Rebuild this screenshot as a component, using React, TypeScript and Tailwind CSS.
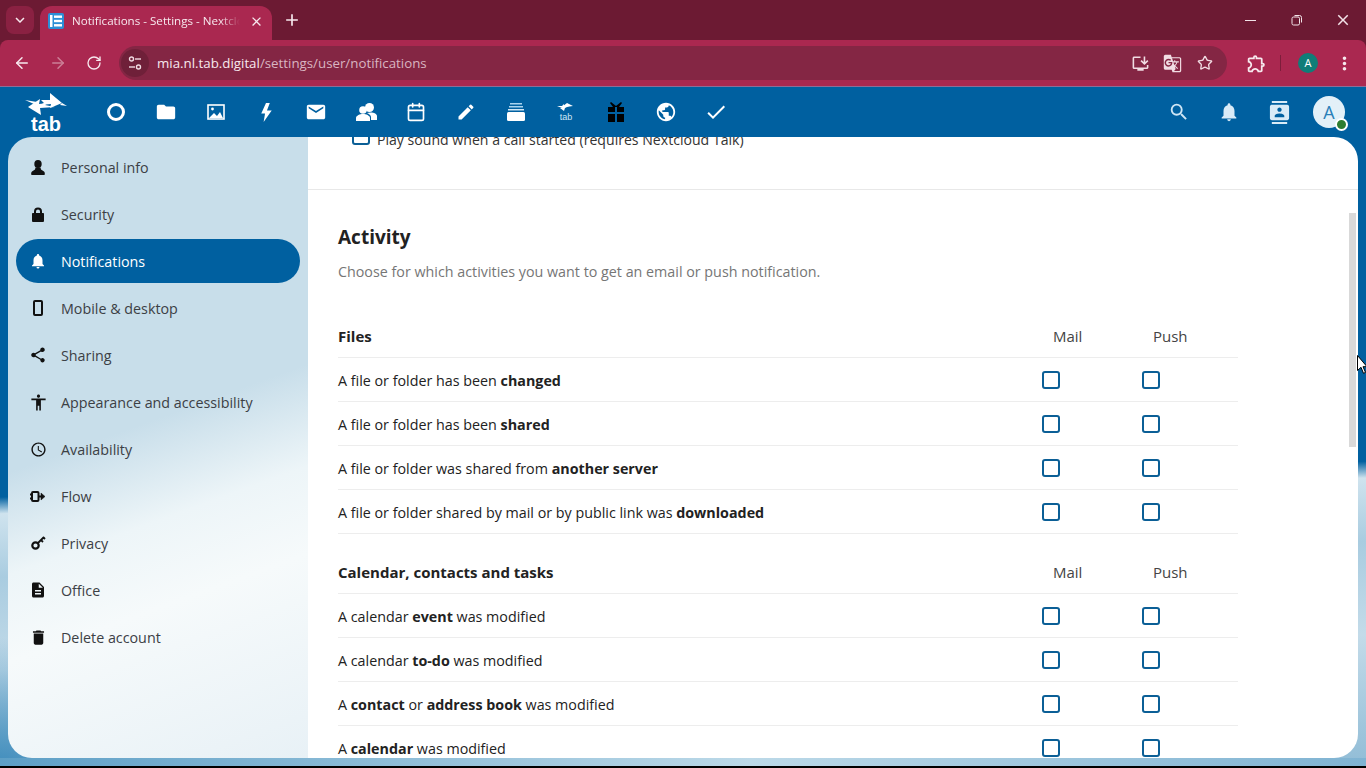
import React from "react";
import {
  MdFolder, MdEmail, MdEdit, MdPublic, MdCheck,
  MdSearch, MdNotifications, MdShare, MdAccessibility, MdAccessTime,
  MdDescription, MdDelete, MdContacts, MdMoreVert, MdOutlineExtension,
  MdInstallDesktop, MdGTranslate, MdClose, MdAdd, MdKeyboardArrowDown,
} from "react-icons/md";
import { ArrowLeft, ArrowRight, RotateCw, Star, Calendar } from "lucide-react";

const sans = "font-['Open_Sans','Liberation_Sans',sans-serif]";

function Check() {
  return <span className="block w-[18px] h-[18px] border-2 border-[#0b5f96] rounded-[3px] bg-white" />;
}

function Row({ children, last }: { children: React.ReactNode; last?: boolean }) {
  return (
    <div className={`flex items-center h-[44px] ${last ? "" : "border-b border-[#ededed]"}`}>
      <div className="flex-1 pt-[2px] text-[14.3px] text-[#222]">{children}</div>
      <div className="w-[100px] flex"><Check /></div>
      <div className="w-[96px] flex"><Check /></div>
    </div>
  );
}

function Head({ title }: { title: string }) {
  return (
    <div className="flex items-center h-[44px] pt-[2px] border-b border-[#ededed] text-[15px]">
      <div className="flex-1 font-bold text-[#222]">{title}</div>
      <div className="w-[100px] text-[#444] pl-[11px]">Mail</div>
      <div className="w-[96px] text-[#444] pl-[11px]">Push</div>
    </div>
  );
}

function Logo() {
  return (
    <div className="flex flex-col items-center text-white w-[42px]">
      <svg width="42" height="23" viewBox="25 93 42 23" fill="white">
        <path d="M50 93l12 10-12 5 1-4-11 1 4-2-3-3 9 0z" />
        <path d="M62 103l5 3-7-1z" />
        <path d="M28 107l12-8-1 5 9-1-3 2 10 2-15 1 1 7z" />
        <path d="M25 100l12 2-3 2z" />
      </svg>
      <span className="text-[20px] leading-[15px] font-bold mt-[1px] font-['Liberation_Sans',sans-serif]">tab</span>
    </div>
  );
}

function Deck() {
  return (
    <svg width="18" height="18" viewBox="0 0 18 18">
      <rect x="3" y="0" width="12" height="1.5" fill="#a9d3ee" />
      <rect x="2" y="3" width="14" height="1.5" fill="#a9d3ee" />
      <rect x="1" y="6" width="16" height="1.5" fill="#cfe6f5" />
      <rect x="0" y="9" width="18" height="9" rx="1.5" fill="#fff" />
    </svg>
  );
}

function TabMini() {
  return (
    <svg width="18" height="18" viewBox="0 0 18 18" fill="#fff">
      <path d="M10 0l6 3-7 1-3 1 3-2-3 0z" />
      <path d="M0 3l5 0 2-2 0 2 5 0-4 2-1 3-4-3 2 0z" />
      <text x="9" y="17" textAnchor="middle" fontSize="9" fill="#cfe6f5" fontFamily="Liberation Sans">tab</text>
    </svg>
  );
}

function Gift() {
  return (
    <svg width="16" height="20" viewBox="0 0 16 20" fill="#000">
      <path d="M3 0l5 4 5-4 1 1-3 4h5v5H9V5H7v5H0V5h5L2 1z" />
      <rect x="0" y="12" width="7" height="8" />
      <rect x="9" y="12" width="7" height="8" />
    </svg>
  );
}

function Picture() {
  return (
    <svg width="18" height="16" viewBox="0 0 18 16">
      <rect x="1" y="1" width="16" height="14" fill="none" stroke="#fff" strokeWidth="1.6" />
      <circle cx="5.5" cy="5" r="1.4" fill="#fff" />
      <path d="M2 14l5-5 3 3 3-4 3 6z" fill="#fff" />
    </svg>
  );
}

function Bolt() {
  return (
    <svg width="12" height="19" viewBox="0 0 12 20" fill="#fff">
      <path d="M6 0L1 11h4l-1.500 9L12 8H7l3-8z" />
    </svg>
  );
}

function Contacts() {
  return (
    <svg width="21" height="18" viewBox="0 0 21 18" fill="#fff">
      <circle cx="13.500" cy="4.500" r="4.500" />
      <path d="M11 10c5-1.500 10 .5 10 3v4h-6v-3c0-2-2-3-4-4z" />
      <circle cx="7" cy="7" r="3.800" />
      <path d="M0 18v-3c0-2.500 4-4 7-4s7 1.500 7 4v3z" />
    </svg>
  );
}

function Bust() {
  return (
    <svg width="14" height="15" viewBox="0 0 14 15" fill="#111">
      <ellipse cx="7" cy="4" rx="3.700" ry="4" />
      <path d="M4.500 7.500h5l.5 2 3 2c1 .8 1 3 .5 3.500H.5C0 14.500 0 12.300 1 11.500l3-2z" />
    </svg>
  );
}

function Lock() {
  return (
    <svg width="12" height="15" viewBox="0 0 12 15" fill="#111">
      <path d="M2 6V4.500a4 4 0 0 1 8 0V6h1.200a.8.8 0 0 1 .8.800V14a1 1 0 0 1-1 1H1a1 1 0 0 1-1-1V6.800A.8.8 0 0 1 .8 6zm2 0h4V4.500a2 2 0 0 0-4 0z" />
    </svg>
  );
}

function Key() {
  return (
    <svg width="15" height="14" viewBox="0 0 15 14" fill="none" stroke="#111">
      <circle cx="4.500" cy="9.500" r="3.200" strokeWidth="2.200" />
      <path d="M7 7l6-6M10 4l2 2M12.500 1.500l1.500 1.500" strokeWidth="1.800" />
    </svg>
  );
}

function Flow() {
  return (
    <svg width="16" height="11" viewBox="0 0 16 11" fill="none" stroke="#111" strokeWidth="2">
      <rect x="2" y="1" width="6.500" height="9" rx="1" />
      <path d="M0 3.500h2M0 7.500h2M8.500 5.500h4" />
      <path d="M11 2l4 3.500-4 3.500z" fill="#111" strokeWidth="0.5" />
    </svg>
  );
}

function Tune() {
  return (
    <svg width="14" height="14" viewBox="0 0 14 14" fill="none" stroke="#f1dce3" strokeWidth="1.400">
      <circle cx="3.500" cy="3" r="2" />
      <path d="M7 3h6" />
      <circle cx="10.500" cy="11" r="2" />
      <path d="M1 11h6" />
    </svg>
  );
}

function Favicon() {
  return (
    <svg width="16" height="16" viewBox="0 0 16 16">
      <rect width="16" height="16" rx="2" fill="#2b8fd6" />
      <rect x="2" y="2" width="2.500" height="12" fill="#fff" />
      <rect x="6" y="2.500" width="8" height="2.400" fill="#fff" />
      <rect x="6" y="6.800" width="8" height="2.400" fill="#fff" />
      <rect x="6" y="11.100" width="8" height="2.400" fill="#fff" />
    </svg>
  );
}

function Restore() {
  return (
    <svg width="12" height="12" viewBox="0 0 12 12" fill="none" stroke="#f2e3e8" strokeWidth="1">
      <rect x="1" y="3" width="7.500" height="8" rx="1.500" />
      <path d="M3.500 1.500h5a2 2 0 0 1 2 2v5" />
    </svg>
  );
}

function Cursor() {
  return (
    <svg width="10" height="20" viewBox="0 0 10 20">
      <path d="M0.500 0.500v15l3.500-3.200 2.500 6 2-.9-2.500-5.700H10z" fill="#fff" stroke="#000" strokeWidth="1" />
    </svg>
  );
}

const navIcons: React.ReactNode[] = [
  <span key="d" className="block w-[18px] h-[18px] rounded-full border-[3px] border-white" />,
  <MdFolder key="f" size={22} />,
  <Picture key="i" />,
  <Bolt key="b" />,
  <MdEmail key="m" size={22} />,
  <Contacts key="p" />,
  <Calendar key="c" size={20} strokeWidth={2} />,
  <MdEdit key="e" size={20} />,
  <Deck key="dk" />,
  <TabMini key="t" />,
  <Gift key="g" />,
  <MdPublic key="pb" size={22} />,
  <MdCheck key="ck" size={24} />,
];

const side: { label: string; icon: React.ReactNode; active?: boolean }[] = [
  { label: "Personal info", icon: <Bust /> },
  { label: "Security", icon: <Lock /> },
  { label: "Notifications", icon: <MdNotifications size={18} />, active: true },
  { label: "Mobile & desktop", icon: <span className="block w-[10px] h-[16px] border-2 border-[#111] rounded-[2px]" /> },
  { label: "Sharing", icon: <MdShare size={18} /> },
  { label: "Appearance and accessibility", icon: <MdAccessibility size={19} /> },
  { label: "Availability", icon: <MdAccessTime size={17} /> },
  { label: "Flow", icon: <Flow /> },
  { label: "Privacy", icon: <Key /> },
  { label: "Office", icon: <MdDescription size={18} /> },
  { label: "Delete account", icon: <MdDelete size={19} /> },
];

export default function App() {
  return (
    <div className={`relative w-[1366px] h-[768px] overflow-hidden flex flex-col bg-black ${sans}`}>
      {/* Tab strip */}
      <div className="h-[40px] bg-[#6c1a33] flex shrink-0 text-[#f7e9ee] pt-[6px]">
        <div className="w-[28px] h-[28px] ml-[6px] rounded-[8px] bg-[#8a2142] flex items-center justify-center">
          <MdKeyboardArrowDown size={18} />
        </div>
        <div className="w-[232px] h-[34px] ml-[6px] rounded-t-[12px] bg-[#aa2850] flex items-center pl-[8px] pr-[7px] pb-[4px]">
          <Favicon />
          <span className="ml-[8px] w-[168px] text-[11.6px] whitespace-nowrap overflow-hidden [mask-image:linear-gradient(to_right,black_88%,transparent)]">
            Notifications - Settings - Nextcloud
          </span>
          <MdClose size={15} className="ml-[9px]" />
        </div>
        <MdAdd size={20} className="ml-[10px] mt-[4px]" />
        <div className="flex-1" />
        <div className="flex items-center pb-[6px] pr-[14px]">
          <span className="block w-[11px] h-[1px] bg-[#f2e3e8]" />
          <span className="ml-[35px]"><Restore /></span>
          <MdClose size={18} className="ml-[31px] text-[#f2e3e8]" />
        </div>
      </div>

      {/* Toolbar */}
      <div className="h-[47px] bg-[#6c1a33] shrink-0">
        <div className="h-[46px] bg-[#aa2850] rounded-t-[8px] flex items-center text-[#f7e9ee] pl-[13px]">
          <ArrowLeft size={18} strokeWidth={2} />
          <ArrowRight size={18} strokeWidth={2} className="ml-[18px] text-[#cc7f96]" />
          <RotateCw size={16} strokeWidth={2} className="ml-[19px]" />
          <div className="ml-[17px] w-[1108px] h-[34px] rounded-full bg-[#842644] flex items-center">
            <span className="w-[28px] h-[28px] ml-[2px] rounded-full bg-[#6f2039] flex items-center justify-center"><Tune /></span>
            <span className="ml-[8px] pt-[1px] text-[13.3px] text-[#f7e9ee] whitespace-nowrap">
              mia.nl.tab.digital<span className="text-[#d9b5c1]">/settings/user/notifications</span>
            </span>
            <div className="flex-1" />
            <MdInstallDesktop size={19} className="text-[#f1dce3]" />
            <MdGTranslate size={19} className="ml-[13px] text-[#f1dce3]" />
            <Star size={16} strokeWidth={2} className="ml-[15px] mr-[14px] text-[#f1dce3]" />
          </div>
          <MdOutlineExtension size={21} className="ml-[19px]" />
          <span className="ml-[13px] block w-[1px] h-[16px] bg-[#7d1d3b]" />
          <span className="ml-[17px] w-[20px] h-[20px] rounded-full bg-[#0f7d78] text-white text-[11px] flex items-center justify-center">A</span>
          <MdMoreVert size={21} className="ml-[16px]" />
        </div>
        <div className="h-[1px] bg-[#8d6d98]" />
      </div>

      {/* Nextcloud header */}
      <div className="h-[50px] bg-[#0060a0] shrink-0 flex items-center text-white">
        <div className="w-[91px] pl-[25px]"><Logo /></div>
        {navIcons.map((ic, i) => (
          <div key={i} className="w-[50px] h-[50px] flex items-center justify-center">{ic}</div>
        ))}
        <div className="flex-1" />
        <div className="w-[50px] flex justify-center text-[#cfe6f5]"><MdSearch size={22} /></div>
        <div className="w-[50px] flex justify-center text-[#d9ebf7]"><MdNotifications size={22} /></div>
        <div className="w-[50px] flex justify-center text-[#d9ebf7]"><MdContacts size={23} /></div>
        <div className="relative w-[32px] h-[32px] ml-[9px] mr-[21px] rounded-full bg-[#e3f0f8] text-[#2a7fb8] flex items-center justify-center text-[18px]">
          A
          <span className="absolute right-[-3px] bottom-[-3px] w-[13px] h-[13px] rounded-full bg-[#2d7d32] border-2 border-white" />
        </div>
      </div>

      {/* Body */}
      <div className="flex-1 min-h-0 flex flex-col bg-[radial-gradient(160px_130px_at_0%_100%,#3f8cbc,transparent),linear-gradient(178.500deg,#0060a0_0%,#0060a0_54%,#cfe3ee_56.500%,#a9cce0_66%,#c3dbe9_80%,#90bcd6_100%)]">
        <div className="flex-1 min-h-0 flex px-[8px]">
          <aside className="w-[300px] shrink-0 rounded-l-[24px] pt-[8px] px-[8px] bg-[linear-gradient(160deg,#c8deea_0%,#c8deea_46%,#edf5f8_60%,#f6fafb_72%,#e8f1f6_100%)]">
            {side.map((s) => (
              <div
                key={s.label}
                className={`flex items-center rounded-full h-[44px] mb-[3px] text-[14.3px] ${s.active ? "bg-[#0060a0] text-white font-medium" : "text-[#3c4045]"}`}
              >
                <span className={`w-[44px] flex justify-center ${s.active ? "text-white" : "text-[#111]"}`}>{s.icon}</span>
                <span className="ml-[1px] pt-[1px]">{s.label}</span>
              </div>
            ))}
          </aside>
          <main className="relative flex-1 bg-white rounded-r-[24px] overflow-hidden">
            <div className="-mt-[21px]">
              <div className="h-[44px] flex items-center pl-[44px] text-[14.1px] text-[#333]">
                <span className="-mt-[4px]"><Check /></span>
                <span className="ml-[7px] pt-[3px]">Play sound when a call started (requires Nextcloud Talk)</span>
              </div>
              <div className="h-[30px] border-b border-[#e8e8e8]" />
              <div className="pl-[30px]">
                <h2 className="mt-[31px] text-[19px] leading-[32px] font-bold text-[#222]">Activity</h2>
                <p className="mt-[7px] text-[14.3px] leading-[24px] text-[#767676]">Choose for which activities you want to get an email or push notification.</p>
                <div className="w-[900px] mt-[30px]">
                  <Head title="Files" />
                  <Row>A file or folder has been <b className="font-bold">changed</b></Row>
                  <Row>A file or folder has been <b className="font-bold">shared</b></Row>
                  <Row>A file or folder was shared from <b className="font-bold">another server</b></Row>
                  <Row>A file or folder shared by mail or by public link was <b className="font-bold">downloaded</b></Row>
                  <div className="h-[16px]" />
                  <Head title="Calendar, contacts and tasks" />
                  <Row>A calendar <b className="font-bold">event</b> was modified</Row>
                  <Row>A calendar <b className="font-bold">to-do</b> was modified</Row>
                  <Row>A <b className="font-bold">contact</b> or <b className="font-bold">address book</b> was modified</Row>
                  <Row last>A <b className="font-bold">calendar</b> was modified</Row>
                </div>
              </div>
            </div>
            <div className="absolute top-[76px] right-[2px] w-[7px] h-[234px] bg-[#d9d9d9]" />
          </main>
        </div>
        <div className="h-[8px] shrink-0 bg-[linear-gradient(90deg,#5d9fc6,#bcd9e8_55%,#7fb3d2)]" />
        <div className="h-[2px] shrink-0 bg-black" />
      </div>
      <div className="absolute left-[1357px] top-[355px]"><Cursor /></div>
    </div>
  );
}
